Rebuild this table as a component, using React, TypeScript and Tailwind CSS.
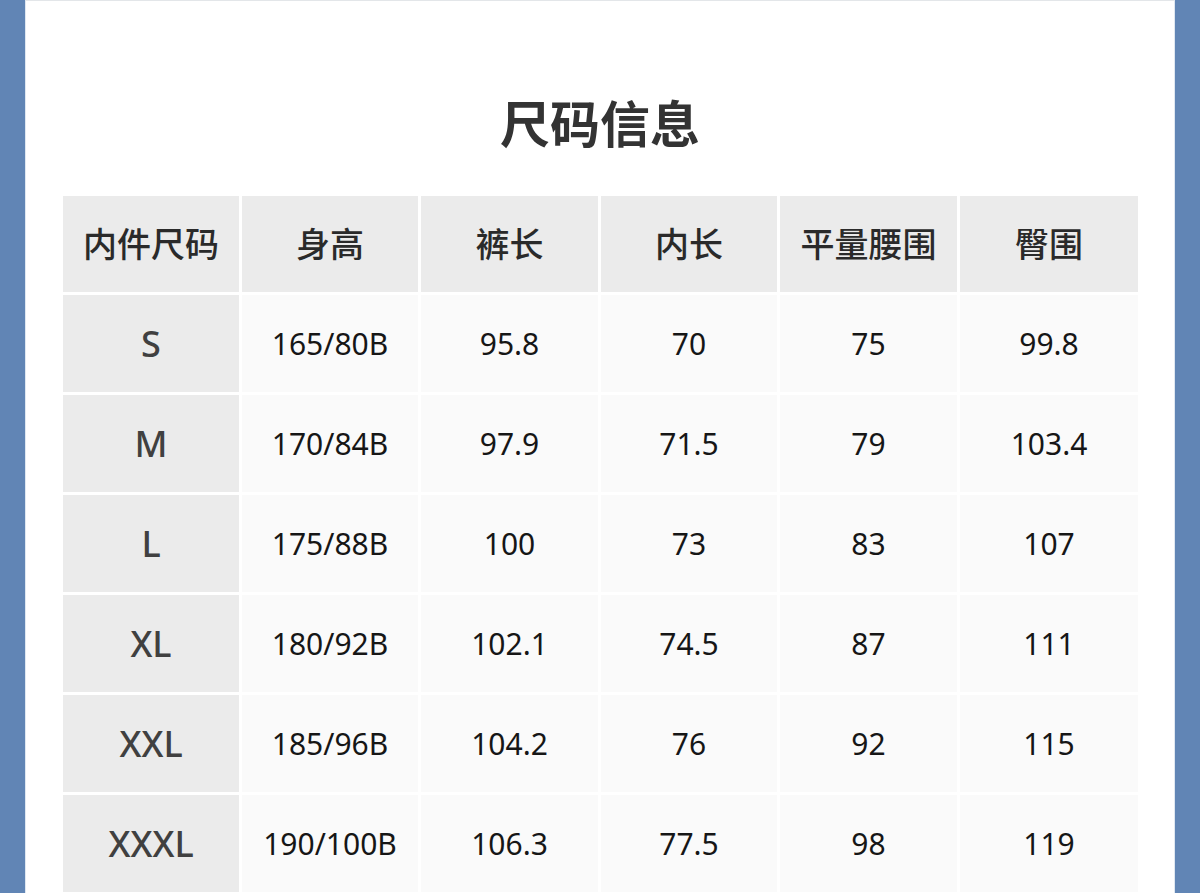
import React from "react";

const headers = ["内件尺码", "身高", "裤长", "内长", "平量腰围", "臀围"];

const rows = [
  ["S", "165/80B", "95.8", "70", "75", "99.8"],
  ["M", "170/84B", "97.9", "71.5", "79", "103.4"],
  ["L", "175/88B", "100", "73", "83", "107"],
  ["XL", "180/92B", "102.1", "74.5", "87", "111"],
  ["XXL", "185/96B", "104.2", "76", "92", "115"],
  ["XXXL", "190/100B", "106.3", "77.5", "98", "119"],
];

const App = () => {
  return (
    <div
      className="min-h-[893px] bg-[#6185b5] px-[25px]"
      style={{ fontFamily: '"Noto Sans", "Noto Sans CJK SC", sans-serif' }}
    >
      <div className="min-h-[893px] bg-white border-t border-[#e3e6e9] border-x border-x-[#dfe7f1]">
        {/* Title */}
        <div className="h-[195px] pt-[89px] text-center">
          <h1 className="text-[50px] leading-[68px] font-bold text-[#333333]">
            尺码信息
          </h1>
        </div>

        {/* Size table */}
        <div className="ml-[37px] grid grid-cols-[176px_176px_177px_176px_177px_178px] gap-[3px]">
          {headers.map((h) => (
            <div
              key={h}
              className="h-[96px] bg-[#ebebeb] flex items-center justify-center text-[34px] font-medium text-[#2a2a2a]"
            >
              {h}
            </div>
          ))}
          {rows.map((row) =>
            row.map((cell, i) =>
              i === 0 ? (
                <div
                  key={row[0] + i}
                  className="h-[97px] bg-[#ebebeb] flex items-center justify-center text-[36px] font-medium text-[#404040]"
                >
                  {cell}
                </div>
              ) : (
                <div
                  key={row[0] + i}
                  className="h-[97px] bg-[#fafafa] flex items-center justify-center text-[30px] text-[#161616]"
                >
                  {cell}
                </div>
              ),
            ),
          )}
        </div>
      </div>
    </div>
  );
};

export default App;
